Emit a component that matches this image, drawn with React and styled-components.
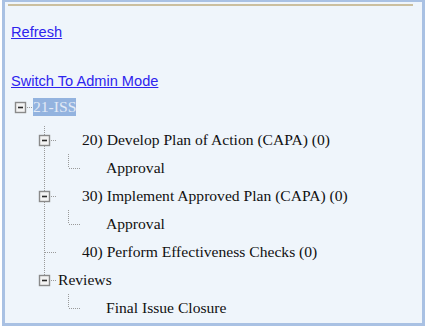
import React from "react";
import styled, { createGlobalStyle } from "styled-components";

const GlobalStyle = createGlobalStyle`
  body {
    margin: 0;
    background: #fff;
  }
`;

const Panel = styled.div`
  box-sizing: border-box;
  margin-left: 2px;
  width: 423px;
  height: 326px;
  background: #eff5fb;
  border: 3px solid #a9c1e3;
  border-top-width: 2px;
  overflow: hidden;
`;

const TopRule = styled.div`
  height: 2px;
  margin: 2px 9px 0 3px;
  background: #cbbf9f;
`;

const Links = styled.div`
  padding-left: 6px;
  display: flex;
  flex-direction: column;
  align-items: flex-start;
`;

const Link = styled.a`
  font-family: "Liberation Sans", Arial, sans-serif;
  font-size: 14.6px;
  line-height: 17px;
  color: #2d24ee;
  text-decoration: underline;
  cursor: pointer;
  margin-top: ${(p) => p.$gap}px;
`;

const Tree = styled.div`
  padding-left: 3px;
  margin-top: 3px;
`;

const Children = styled.div`
  margin-top: 5px;
`;

const Row = styled.div`
  display: flex;
  align-items: center;
  height: 28px;
`;

const Spacer = styled.span`
  width: 24px;
  flex: none;
`;

const Label = styled.span`
  font-family: "Liberation Serif", "Times New Roman", serif;
  font-size: 15.6px;
  color: #111;
  padding-left: 2px;
  white-space: nowrap;
`;

const Selected = styled.span`
  font-family: "Liberation Serif", "Times New Roman", serif;
  font-size: 15.6px;
  line-height: 18px;
  color: #e2eaf6;
  background: #93b3df;
  margin-left: 1px;
  white-space: nowrap;
`;

const Cell = styled.svg`
  flex: none;
  display: block;
`;

const Connector = ({ up, down, right, box }) => (
  <Cell width="24" height="28" viewBox="0 0 24 28">
    <g stroke="#9a9a9a" strokeWidth="1" strokeDasharray="1 1" fill="none">
      {up && <line x1="12.5" y1="0" x2="12.5" y2="14" />}
      {down && <line x1="12.5" y1="14" x2="12.5" y2="28" />}
      {right && <line x1="13" y1="14.5" x2="24" y2="14.5" />}
    </g>
    {box && (
      <g>
        <rect x="7.5" y="9.5" width="10" height="10" fill="#f3f3f3" stroke="#8a8a8a" strokeWidth="1.4" />
        <line x1="10" y1="14.5" x2="15" y2="14.5" stroke="#2a2a2a" strokeWidth="1.6" />
      </g>
    )}
  </Cell>
);

const Blank = () => <Cell width="24" height="28" />;

const App = () => {
  return (
    <>
      <GlobalStyle />
      <Panel>
        <TopRule />
        <Links>
          <Link $gap={18}>Refresh</Link>
          <Link $gap={32}>Switch To Admin Mode</Link>
        </Links>
        <Tree>
          <Row>
            <Connector right box />
            <Selected>21-ISS</Selected>
          </Row>
          <Children>
            <Row>
              <Blank />
              <Connector up down right box />
              <Spacer />
              <Label>20) Develop Plan of Action (CAPA) (0)</Label>
            </Row>
            <Row>
              <Blank />
              <Connector up down />
              <Connector up right />
              <Spacer />
              <Label>Approval</Label>
            </Row>
            <Row>
              <Blank />
              <Connector up down right box />
              <Spacer />
              <Label>30) Implement Approved Plan (CAPA) (0)</Label>
            </Row>
            <Row>
              <Blank />
              <Connector up down />
              <Connector up right />
              <Spacer />
              <Label>Approval</Label>
            </Row>
            <Row>
              <Blank />
              <Connector up down right />
              <Spacer />
              <Label>40) Perform Effectiveness Checks (0)</Label>
            </Row>
            <Row>
              <Blank />
              <Connector up right box />
              <Label>Reviews</Label>
            </Row>
            <Row>
              <Blank />
              <Blank />
              <Connector up right />
              <Spacer />
              <Label>Final Issue Closure</Label>
            </Row>
          </Children>
        </Tree>
      </Panel>
    </>
  );
};

export default App;
